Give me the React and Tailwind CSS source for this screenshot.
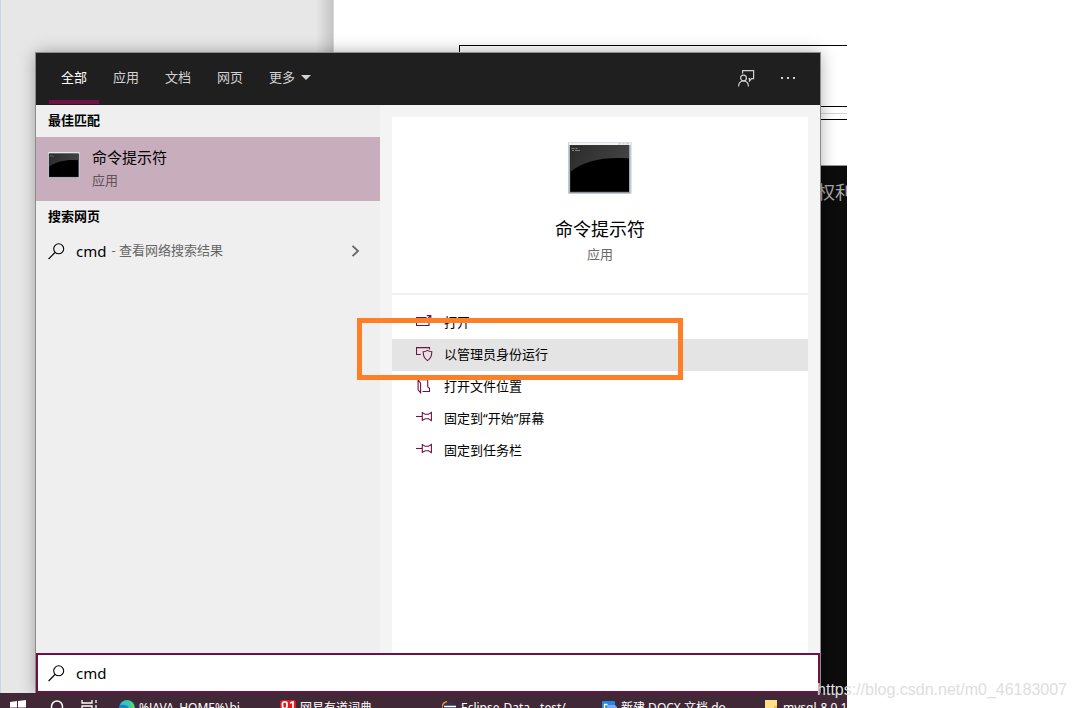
const cjk = "font-['Noto_Sans','Noto_Sans_CJK_SC',sans-serif]";

function SearchIcon({ className }) {
  return (
    <svg className={className} width="17" height="17" viewBox="0 0 17 17" fill="none" stroke="currentColor" strokeWidth="1.1">
      <circle cx="10.7" cy="5.8" r="5" />
      <path d="M7 9.500 0.600 16" />
    </svg>
  );
}

function ConsoleIcon({ className }) {
  return (
    <svg className={className} viewBox="0 0 64 52" preserveAspectRatio="none">
      <defs>
        <linearGradient id="gloss" x1="0" y1="0" x2="1" y2="0.3">
          <stop offset="0" stopColor="#2b2b2b" />
          <stop offset="1" stopColor="#424242" />
        </linearGradient>
      </defs>
      <rect x="0" y="0" width="63.5" height="52" rx="1" fill="#c3cad2" />
      <rect x="0.8" y="0.5" width="62" height="2.5" fill="#f2f4f6" />
      <rect x="1.6" y="3" width="60" height="48" fill="#8d939c" />
      <rect x="2.2" y="3.4" width="58.8" height="46.4" fill="#000" />
      <path d="M2.2 3.4H61V16.4C36 14.5 15 19 2.2 30Z" fill="url(#gloss)" />
      <path d="M3.5 6.5h3M7.5 6.5h2M4 8.5h2M7 8.5h5" stroke="#9a9a9a" strokeWidth="0.8" />
      <path d="M50 1.8h3M54.5 1.8h2M58 1.8h3" stroke="#b3b9c0" strokeWidth="0.8" />
    </svg>
  );
}

function ActionIcon({ kind }) {
  return (
    <svg className="shrink-0" width="17" height="16" viewBox="0 0 17 16" fill="none" stroke="#6e1245" strokeWidth="1.1">
      {kind === "open" && <path d="M10.5 2.500H0.500v8h12.500V5.500M8.500 7 14.300 1.200M10.800.6h4v4" />}
      {kind === "admin" && (
        <>
          <path d="M4.800 7.500H0.500V.6h13v1.800" />
          <path d="M11.500 3.400c1.200.9 2.600 1.300 4.300 1.300 0 3.900-.9 6.800-4.300 8.900-3.400-2.100-4.300-5-4.300-8.900 1.700 0 3.100-.4 4.300-1.300Z" />
        </>
      )}
      {kind === "folder" && <path d="M11.500.6H2.100V10.800L4.600 13.700V4.200L2.100 1.200M6.500 12.500h7V9.300l-1.800-1.500V.6" />}
      {kind === "pin" && <path d="M0 5.500h6M6.300 1v9M6.300 1.600 9.200 3.300h3.300l2.900-1.900v8.200l-2.900-1.900H9.200L6.300 9.400" />}
    </svg>
  );
}

const actions = [
  { kind: "open", label: "打开" },
  { kind: "admin", label: "以管理员身份运行", active: true },
  { kind: "folder", label: "打开文件位置" },
  { kind: "pin", label: "固定到“开始”屏幕" },
  { kind: "pin", label: "固定到任务栏" },
];

function Backdrop() {
  return (
    <div className="flex min-h-0 flex-1">
      <div className="flex w-[334px] shrink-0 justify-end border-l border-[#c8d4ea] bg-[#e7e7e7]">
        <div className="w-[18px] border-r border-[#d9d9d9] bg-linear-to-r from-[#e7e7e7] to-[#c4c4c4]" />
      </div>
      <div className="flex min-w-0 flex-1 flex-col bg-white">
        <div className="h-[165px] pt-[45px] pl-[125px]">
          <div className="h-[62px] border-y border-l border-black" />
          <div className="mt-1.5 h-px bg-[#d4d4d4]" />
          <div className="mt-[5px] h-px bg-black" />
        </div>
        <div className="flex-1 overflow-hidden border-t border-[#999999] bg-[#0c0c0c] pt-[14px] pl-[483px] text-lg leading-6 whitespace-nowrap text-[#a8a8a8]">
          权利
        </div>
      </div>
    </div>
  );
}

function Header() {
  return (
    <header className="flex h-[52px] shrink-0 items-stretch justify-between bg-[#1f1f1f] pr-5 pl-[13px] text-[13px] text-[#d2d2d2]">
      <nav className="flex gap-0.5">
        <button className="mb-px border-b-4 border-[#6e1245] px-3 pt-0.5 text-white">全部</button>
        {["应用", "文档", "网页"].map((t) => (
          <button key={t} className="mb-px border-b-4 border-transparent px-3 pt-0.5">{t}</button>
        ))}
        <button className="mb-px flex items-center gap-1.5 border-b-4 border-transparent px-3 pt-0.5">
          更多
          <svg width="10" height="5" viewBox="0 0 10 5"><path d="M0 0h10L5 5Z" fill="currentColor" /></svg>
        </button>
      </nav>
      <div className="flex items-center gap-[25px] pb-0.5">
        <button aria-label="反馈">
          <svg width="17" height="17" viewBox="0 0 17 17" fill="none" stroke="currentColor" strokeWidth="1.200">
            <path d="M4.600 3.500V.6h11v8h-2L11.500 11V8.600h-1" />
            <circle cx="5.500" cy="8" r="2.900" />
            <path d="M.6 16.500c0-3.500 2-5.500 4.900-5.500s4.900 2 4.900 5.500" />
          </svg>
        </button>
        <button aria-label="选项" className="mr-1">
          <svg width="16" height="4" viewBox="0 0 16 4" fill="currentColor">
            <path d="M1 1h2v2H1zM7 1h2v2H7zM13 1h2v2h-2z" />
          </svg>
        </button>
      </div>
    </header>
  );
}

function Results() {
  return (
    <section className="w-[344px] shrink-0 bg-[#efefef]">
      <h2 className="h-8 px-3 text-[13px] leading-[30px] font-bold">最佳匹配</h2>
      <button className="flex h-16 w-full gap-3 bg-[#c8adbc] px-3 text-left">
        <ConsoleIcon className="mt-[15px] h-[26px] w-8" />
        <span className="flex flex-col pt-2">
          <span className="text-[15px] leading-6">命令提示符</span>
          <span className="text-[13px] leading-[22px] text-[#5f5259]">应用</span>
        </span>
      </button>
      <h2 className="h-8 px-3 text-[13px] leading-[30px] font-bold">搜索网页</h2>
      <button className="flex h-9 w-full items-center px-3 pr-5 text-left">
        <SearchIcon />
        <span className="ml-[11px] text-[15px]">cmd</span>
        <span className="ml-[5px] flex-1 text-[13px] text-[#666666]">- 查看网络搜索结果</span>
        <svg width="9" height="12" viewBox="0 0 9 12" fill="none" stroke="#666666" strokeWidth="1.800"><path d="m1.500.8 5.500 5.200-5.500 5.200" /></svg>
      </button>
    </section>
  );
}

function Details() {
  return (
    <section className="flex flex-1 flex-col bg-[#f4f4f4] px-3 pt-3">
      <div className="flex-1 bg-white">
        <div className="flex h-44 flex-col items-center pt-[25px]">
          <ConsoleIcon className="h-[52px] w-16" />
          <h1 className="mt-5 text-lg leading-[30px]">命令提示符</h1>
          <p className="text-[13px] leading-5 text-[#6b6b6b]">应用</p>
        </div>
        <ul className="border-t-2 border-[#f0f0f0] pt-3">
          {actions.map((a) => (
            <li key={a.label}>
              <button className={"flex h-8 w-full items-center gap-[11px] px-6 text-left text-[13px] " + (a.active ? "bg-[#e4e4e4]" : "")}>
                <ActionIcon kind={a.kind} />
                {a.label}
              </button>
            </li>
          ))}
        </ul>
      </div>
    </section>
  );
}

function TaskItem({ icon, label, className }) {
  return (
    <button className={"flex shrink-0 items-center gap-1 whitespace-nowrap " + className}>
      {icon}
      {label}
    </button>
  );
}

function Taskbar() {
  return (
    <footer className="h-[15px] shrink-0 overflow-hidden bg-[#402836] text-xs text-white">
      <div className="flex h-[30px] items-center pl-[10px]">
        <button aria-label="开始" className="w-10 shrink-0">
          <svg width="16" height="16" viewBox="0 0 16 16" fill="currentColor"><path d="M0 2l7-1v6.500H0zM8 .9 16 0v7.500H8zM0 8.500h7V15l-7-1zM8 8.500h8V16l-8-.9z" /></svg>
        </button>
        <button aria-label="搜索" className="w-[31px] shrink-0">
          <svg width="14" height="16" viewBox="0 0 14 16" fill="none" stroke="currentColor" strokeWidth="1.500"><circle cx="7" cy="6.500" r="5.500" /></svg>
        </button>
        <button aria-label="任务视图" className="w-[38px] shrink-0">
          <svg width="17" height="16" viewBox="0 0 17 16" fill="none" stroke="currentColor" strokeWidth="1.300"><path d="M1 0v3h10V0M1 6h10v6H1zM15 0v3M15 5v9" /></svg>
        </button>
        <TaskItem className="w-[161px]" label="%JAVA_HOME%\bi" icon={
          <svg width="16" height="16" viewBox="0 0 16 16"><circle cx="8" cy="8" r="8" fill="#1684cf" /><path d="M1 5C3 0 9-1 13 2c3 3 3 6 2 8H9c2-3-1-6-8-5Z" fill="#38c8ad" /><path d="M10 1c5 2 6 6 5 9h-4c2-3 1-6-1-9Z" fill="#66d45a" /></svg>
        } />
        <TaskItem className="w-[162px]" label="网易有道词典" icon={
          <svg width="16" height="16" viewBox="0 0 16 16"><rect width="16" height="16" rx="2.500" fill="#e5191d" /><path d="M2.500 3v3q0 2.500 2.200 2.500T7 6V3Q6.800 1.800 4.800 1.800T2.500 3M10 3l3-1v6q0 5-6 5" fill="none" stroke="#fff" strokeWidth="1.700" /></svg>
        } />
        <TaskItem className="w-[160px]" label="Eclipse-Data - test/" icon={
          <svg width="15" height="15" viewBox="0 0 15 15"><path d="M5 .5A7 7 0 0 0 5 14" fill="none" stroke="#e9952f" strokeWidth="1.500" /><circle cx="8" cy="7.500" r="6.500" fill="#33305f" /><path d="M2 5.500h12M1.500 8.500h13" stroke="#fff" strokeWidth="1.300" /></svg>
        } />
        <TaskItem className="w-[163px]" label="新建 DOCX 文档.do" icon={
          <svg width="15" height="15" viewBox="0 0 15 15"><rect width="13" height="12" rx="1" fill="#2586e8" /><path d="M5 4h8l2 2v9H5z" fill="#76a9f5" /><path d="M2.500 8V3.500h3" fill="none" stroke="#fff" strokeWidth="1.300" /></svg>
        } />
        <TaskItem className="w-[120px]" label="mysql-8.0.1" icon={
          <svg width="14" height="16" viewBox="0 0 14 16"><path d="M0 0h12v16H0z" fill="#ffe08a" /><path d="M9 6h3v10H9z" fill="#f0c04f" /></svg>
        } />
      </div>
    </footer>
  );
}

export default function App() {
  return (
    <div className={"relative h-screen overflow-hidden bg-white text-black " + cjk}>
      <main className="relative mr-[229px] flex h-full flex-col overflow-hidden">
        <Backdrop />
        <div className="absolute top-[53px] right-[27px] bottom-[15px] left-9 flex flex-col shadow-[0_0_0_1px_#8c8c8c,0_0_16px_rgba(0,0,0,0.35)]">
          <Header />
          <div className="flex min-h-0 flex-1">
            <Results />
            <Details />
          </div>
          <label className="flex h-10 shrink-0 items-center gap-[11px] border-2 border-[#6e1245] bg-white pl-[10px]">
            <SearchIcon className="shrink-0" />
            <input aria-label="搜索" defaultValue="cmd" className="w-full text-[15px] outline-none" />
          </label>
        </div>
        <div className="relative mt-auto"><Taskbar /></div>
        <div className="pointer-events-none absolute top-[318px] left-[357px] h-[62px] w-[326px] border-5 border-[#ff7f27]" />
      </main>
      <p className="absolute right-[9px] bottom-2 font-['Liberation_Sans',sans-serif] text-base leading-5 text-[#dedede]">
        https://blog.csdn.net/m0_46183007
      </p>
    </div>
  );
}
